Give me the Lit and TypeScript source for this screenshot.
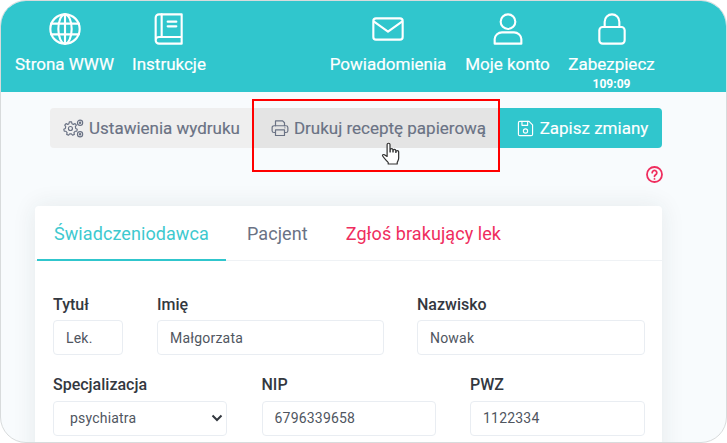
import { LitElement, html, css, svg } from "lit";
import { customElement } from "lit/decorators.js";

const ic = (w: number, body: unknown, sw = 1.6, cls = "") => html`<svg class=${cls} width=${w} height=${w} viewBox="0 0 24 24" fill="none" stroke="currentColor" stroke-width=${sw} stroke-linecap="round" stroke-linejoin="round">${body}</svg>`;

const globe = svg`<circle cx="12" cy="12" r="11"/><ellipse cx="12" cy="12" rx="5" ry="11"/><path d="M1.600 8h20.800M1.600 16h20.800"/><path d="M12 1v22"/>`;
const book = svg`<path d="M2 20.500V3.500A2.500 2.500 0 0 1 4.500 1H21.500V18H4.500A2.500 2.500 0 0 0 2 20.500A2.500 2.500 0 0 0 4.500 23H21.500V18"/><path d="M6.500 1V18"/><path d="M11 6.500h6.500M11 10h6.500"/>`;
const mail = svg`<rect x="1" y="4" width="22" height="16" rx="2"/><path d="M1.500 6.500L12 14L22.500 6.500"/>`;
const user = svg`<circle cx="12" cy="6.500" r="5.500"/><path d="M2 23v-3.500A5.500 5.500 0 0 1 7.500 14.500h9A5.500 5.500 0 0 1 22 19.500V23Z"/>`;
const lock = svg`<rect x="2.500" y="10.500" width="19" height="12.500" rx="2.500"/><path d="M6.500 10.500V6.500a5.500 5.500 0 0 1 11 0v4"/>`;
const gears = svg`<circle cx="8.500" cy="12" r="2.300"/><path d="M7.200 4.500h2.600l.4 2 1.700.8 1.900-.9 1.500 1.800-1.200 1.700.4 2 1.800.9-.5 2.300-2 .1-1.300 1.500.5 2-2.100 1-1.300-1.600h-2l-1.200 1.600-2.200-1 .5-2-1.300-1.500-2-.1-.5-2.300 1.800-.9.400-2L2 8.200l1.500-1.800 1.900.9 1.400-.8Z"/><circle cx="19.500" cy="5.500" r="3"/><circle cx="19.500" cy="18.500" r="3"/><circle cx="19.500" cy="5.500" r=".8"/><circle cx="19.500" cy="18.500" r=".8"/>`;
const printer = svg`<path d="M6 9V2.500h9.500L18 5v4"/><path d="M6 18H4a2.500 2.500 0 0 1-2.500-2.500V11.500A2.500 2.500 0 0 1 4 9h16a2.500 2.500 0 0 1 2.500 2.500v4A2.500 2.500 0 0 1 20 18h-2"/><path d="M6 14.500h12V22H6Z"/><path d="M18.500 11.800h.1"/>`;
const save = svg`<path d="M4 2h13l5 5v13a2 2 0 0 1-2 2H4a2 2 0 0 1-2-2V4a2 2 0 0 1 2-2Z"/><path d="M7 2v5.500h8V2"/><circle cx="12" cy="15.500" r="3"/>`;

@customElement("app-root")
export class AppRoot extends LitElement {
  static styles = css`
    :host { display: block; width: 727px; height: 443px; background: #fff; overflow: hidden; font-family: Roboto, "Liberation Sans", sans-serif; }
    .frame { position: relative; box-sizing: border-box; width: 727px; height: 443px; border: 1px solid #d8dbdc; border-radius: 26px; background: #f8fbfd; overflow: hidden; }
    .head { display: flex; height: 91px; box-sizing: border-box; background: #30c6cd; color: #fff; padding-top: 12px; }
    .nav { display: flex; flex-direction: column; align-items: center; flex: none; font-size: 17px; font-weight: 400; -webkit-text-stroke: .2px currentColor; line-height: 20px; white-space: nowrap; }
    .nav svg { display: block; margin: 0 0 9px; }
    .nav small { font-size: 12px; font-weight: 700; line-height: 14px; margin-top: 3px; -webkit-text-stroke: 0; }
    .n1 { width: 99px; margin-left: 14px; }
    .n2 { width: 74px; margin-left: 18px; }
    .n3 { width: 116px; margin-left: 124px; }
    .n4 { width: 85px; margin-left: 19px; }
    .n5 { width: 87px; margin-left: 18px; }
    .bar { display: flex; height: 40px; margin: 16px 64px 0 49px; }
    .btn { display: flex; align-items: center; justify-content: center; box-sizing: border-box; flex: none; gap: 5px; font-size: 17px; font-weight: 400; -webkit-text-stroke: .15px currentColor; white-space: nowrap; color: #6a7284; background: #efefef; }
    .b1 { width: 203px; border-radius: 4px 0 0 4px; }
    .b2 { width: 247px; background: #e4e4e4; padding-left: 4px; }
    .b3 { width: 162px; background: #30c6cd; color: #fff; border-radius: 0 4px 4px 0; gap: 6px; padding-left: 3px; }
    .help { display: flex; justify-content: flex-end; margin: 18px 63px 0 0; color: #ef2d5e; height: 20px; }
    .card { margin: 20px 64px 0 34px; height: 260px; background: #fff; border-radius: 4px; box-shadow: 0 0 24px rgba(30, 50, 60, .09); }
    .tabs { display: flex; height: 55px; box-sizing: border-box; border-bottom: 1px solid #eff2f5; font-size: 18px; letter-spacing: .08px; padding-left: 2px; }
    .tab { padding: 16px 19px 0 21px; line-height: 24px; color: #6a7284; margin-bottom: -1px; white-space: nowrap; }
    .tab.on { color: #3ec9cf; border-bottom: 2px solid #30c6cd; width: 189px; box-sizing: border-box; padding-left: 17px; }
    .tab.red { color: #ef2d5e; padding-left: 19px; }
    .form { padding: 33.600px 18px 0; display: flex; flex-direction: column; gap: 20px; }
    .row { display: grid; }
    .r1 { grid-template-columns: 70px 227px 228px; column-gap: 34px; }
    .r1 .field:last-child { margin: 0 1px 0 -1px; }
    .r2 { grid-template-columns: 174px 174px 175px; column-gap: 34.500px; }
    .field label { display: block; font-size: 16px; font-weight: 500; line-height: 20px; color: #33383f; margin-bottom: 5.600px; white-space: nowrap; }
    .input { box-sizing: border-box; height: 35px; display: flex; align-items: center; justify-content: space-between; padding: 0 12px; border: 1px solid #e9edf2; border-radius: 4px; background: #fff; font-size: 14px; letter-spacing: .2px; color: #50565f; white-space: nowrap; }
    .select { padding: 0 3px 0 16px; }
    .mark { position: absolute; left: 251px; top: 98px; width: 248px; height: 73px; box-sizing: border-box; border: 2px solid #f00; pointer-events: none; }
    .cursor { position: absolute; left: 380px; top: 141px; }
  `;

  field(label: string, value: string) {
    return html`<div class="field"><label>${label}</label><div class="input">${value}</div></div>`;
  }

  render() {
    return html`<div class="frame">
      <div class="head">
        <div class="nav n1">${ic(32, globe)}Strona WWW</div>
        <div class="nav n2">${ic(32, book)}Instrukcje</div>
        <div class="nav n3">${ic(32, mail)}Powiadomienia</div>
        <div class="nav n4">${ic(32, user)}Moje konto</div>
        <div class="nav n5">${ic(32, lock)}Zabezpiecz<small>109:09</small></div>
      </div>
      <div class="bar">
        <div class="btn b1">${ic(21, gears, 1.3)}Ustawienia wydruku</div>
        <div class="btn b2">${ic(18, printer)}Drukuj receptę papierową</div>
        <div class="btn b3">${ic(17, save)}Zapisz zmiany</div>
      </div>
      <div class="help">${html`<svg width="17" height="17" viewBox="0 0 17 17" fill="none" stroke="currentColor" stroke-width="1.800" stroke-linecap="round"><circle cx="8.500" cy="8.500" r="7.500"/><path d="M6.200 6.700a2.300 2.300 0 1 1 3.500 2c-.8.500-1.200 1-1.200 1.600"/><path d="M8.500 12.800v.1"/></svg>`}</div>
      <div class="card">
        <div class="tabs">
          <div class="tab on">Świadczeniodawca</div>
          <div class="tab">Pacjent</div>
          <div class="tab red">Zgłoś brakujący lek</div>
        </div>
        <div class="form">
          <div class="row r1">${this.field("Tytuł", "Lek.")}${this.field("Imię", "Małgorzata")}${this.field("Nazwisko", "Nowak")}</div>
          <div class="row r2">
            <div class="field"><label>Specjalizacja</label><div class="input select">psychiatra<svg width="12" height="8" viewBox="0 0 12 8" fill="none" stroke="#33383f" stroke-width="2"><path d="M1.500 1.500L6 6L10.500 1.500"/></svg></div></div>
            ${this.field("NIP", "6796339658")}${this.field("PWZ", "1122334")}
          </div>
        </div>
      </div>
      <div class="mark"></div>
      <svg class="cursor" width="20" height="24" viewBox="0 0 18 24" preserveAspectRatio="none" fill="#fff" stroke="#333" stroke-width="1.100" stroke-linejoin="round"><path d="M5.500 2.500a1.300 1.300 0 0 1 2.600 0V10h.2V7.800a1.200 1.200 0 0 1 2.400 0V10h.2V8.600a1.200 1.200 0 0 1 2.400 0V10.500h.2V9.800a1.200 1.200 0 0 1 2.400 0V16c0 2-.7 3-1.300 4.500V22H6.500v-1.500C4.500 18 3 16.500 1.500 14c-.6-1 .6-2 1.600-1.300L5.500 14.500Z"/></svg>
    </div>`;
  }
}
